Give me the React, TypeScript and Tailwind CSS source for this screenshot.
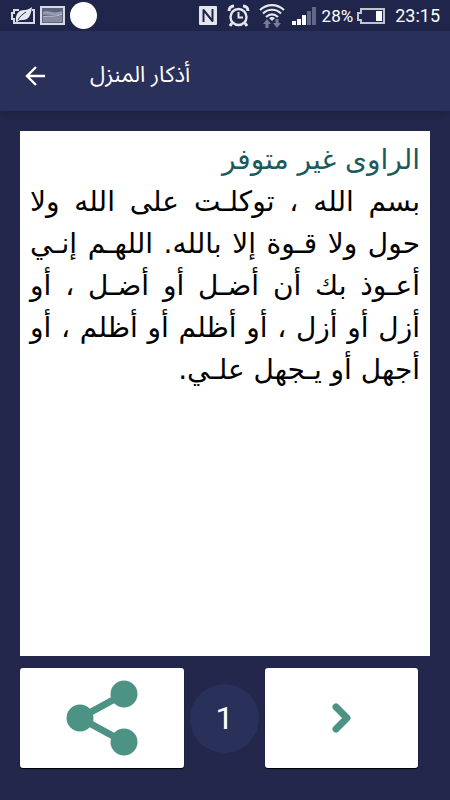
import React from 'react';

const prayerLines = [
  'بسم الله ، توكلـت على الله ولا',
  'حول ولا قـوة إلا بالله. اللهـم إنـي',
  'أعـوذ بك أن أضـل أو أضـل ، أو',
  'أزل أو أزل ، أو أظلم أو أظلم ، أو',
];

const StatusBar: React.FC = () => {
  return (
    <div className="flex h-[31px] items-center justify-between bg-[#20264b] pr-[10px] pl-[10px] text-white">
      <div className="flex items-center gap-[5px]">
        {/* Power saver */}
        <svg width="25" height="18" viewBox="0 0 25 18" fill="none">
          <path d="M9 3H4v3H2v6h2v4h20V3h-2" stroke="#d8dae2" strokeWidth="2" />
          <path d="M6 14C5 6 10 3 14 3c4 0 5-1 8-3-1 9-4 13-9 13-2 0-4 0-5 1l-1 2Z" fill="#e6e7ec" />
          <path d="M8 13c2-4 5-6 8-8" stroke="#20264b" strokeWidth="1" />
        </svg>
        {/* Gallery */}
        <svg width="25" height="19" viewBox="0 0 25 19">
          <rect x="1" y="1" width="23" height="17" fill="#5d647f" stroke="#d8dae2" strokeWidth="2" />
          <path d="M3 6c5-3 9 3 19-1v3c-8 4-12-1-19 1Z" fill="#969bae" />
          <path d="M3 12c6-3 12 1 19-3v7H3Z" fill="#858ba0" />
          <path d="M3 11c6-2 12 1 19-3" stroke="#c5c8d3" fill="none" />
        </svg>
        <span className="h-[27px] w-[27px] rounded-full bg-white" />
      </div>
      <div className="flex items-center">
        {/* NFC */}
        <svg width="18" height="19" viewBox="0 0 18 19" className="mr-[10px]">
          <rect width="18" height="19" rx="1" fill="#e6e7ec" />
          <path d="M4.500 16V4l9 11V3" stroke="#20264b" strokeWidth="2" strokeLinejoin="round" fill="none" />
        </svg>
        {/* Alarm */}
        <svg width="23" height="24" viewBox="0 0 23 24" fill="none" stroke="#e6e7ec" className="mr-[9px]">
          <circle cx="11.500" cy="13" r="8" strokeWidth="2.400" />
          <path d="M11.500 8v5.500H16" strokeWidth="2" />
          <path d="M2 7c0-3 2-5 5-5M21 7c0-3-2-5-5-5M5 19l-2 3M18 19l2 3" strokeWidth="3" />
        </svg>
        {/* Wi-Fi with traffic arrows */}
        <svg width="26" height="26" viewBox="0 0 26 26" fill="none" stroke="#e6e7ec" strokeWidth="2.200" className="mr-[7px]">
          <path d="M1 7c7-6.500 17-6.500 24 0M4 10.500c5-5 13-5 18 0M7 14c4-3.500 8-3.500 12 0" />
          <path d="M10 15q3-2 6 0l-3 3Z" fill="#e6e7ec" stroke="none" />
          <path d="M8 16l4 5H9.500v4h-3v-4H4ZM18 25l-4-5h2.500v-4h3v4H22Z" fill="#777d96" stroke="none" />
        </svg>
        {/* Signal */}
        <svg width="24" height="20" viewBox="0 0 24 20" className="mr-[6px]">
          <path d="M0 15h4v4H0ZM5 13h4v6H5ZM10 9h4v10h-4Z" fill="#fff" />
          <path d="M15 5h4v14h-4ZM20 1h4v18h-4Z" fill="#626986" />
        </svg>
        <span className="mr-[4px] font-['Roboto',sans-serif] text-[17px] leading-[20px]">28%</span>
        {/* Battery */}
        <svg width="28" height="16" viewBox="0 0 28 16" className="mr-[10px]">
          <path d="M4 1h23v14H4v-3H1V5h3Z" fill="none" stroke="#c2c5d0" strokeWidth="2" />
          <rect x="19" y="3" width="6" height="10" fill="#fff" />
        </svg>
        <span className="font-['Roboto',sans-serif] text-[18px] leading-[20px]">23:15</span>
      </div>
    </div>
  );
};

export default function App() {
  return (
    <div className="flex min-h-screen flex-col bg-[#22274b]">
      <StatusBar />

      <header className="flex h-20 items-center bg-[#293059] px-6 pt-2 shadow-md">
        <button type="button" aria-label="رجوع" className="mr-11">
          <svg width="22" height="22" viewBox="0 0 22 22" fill="none" stroke="#fff" strokeWidth="2.400">
            <path d="M21 12H3M12 3l-9 9 9 9" />
          </svg>
        </button>
        <h1 dir="rtl" lang="ar" className="font-['Noto_Sans_Arabic','Noto_Sans',sans-serif] text-[22px] leading-[32px] text-white">
          أذكار المنزل
        </h1>
      </header>

      <main className="flex flex-1 flex-col gap-3 px-5 pt-5 pb-8">
        <section
          dir="rtl"
          lang="ar"
          className="flex-1 bg-white px-[10px] pt-2 font-['DejaVu_Sans',sans-serif] text-[28px] leading-[42px] text-black"
        >
          <h2 className="text-[#1b5a5c]">الراوى غير متوفر</h2>
          <p>
            {prayerLines.map((line) => (
              <span key={line} className="block whitespace-nowrap [text-align-last:justify]">
                {line}
              </span>
            ))}
            <span className="block">أجهل أو يـجهل علـي.</span>
          </p>
        </section>

        <div className="flex items-center gap-[6px] pr-3">
          <button
            type="button"
            aria-label="مشاركة"
            className="flex h-[100px] flex-[164] items-center justify-center rounded-[3px] bg-white shadow-[0_1px_1px_#000]"
          >
            <svg width="72" height="76" viewBox="0 0 72 76" fill="#4c9385">
              <path d="M58 14 14 38l44 24" fill="none" stroke="#4c9385" strokeWidth="7" />
              <circle cx="14" cy="38" r="13.500" />
              <circle cx="58" cy="14" r="13.500" />
              <circle cx="58" cy="62" r="13.500" />
            </svg>
          </button>
          <span className="flex h-[69px] w-[69px] items-center justify-center rounded-full bg-[#293059] font-['Roboto',sans-serif] text-[32px] text-white">
            1
          </span>
          <button
            type="button"
            aria-label="التالي"
            className="flex h-[100px] flex-[153] items-center justify-center rounded-[3px] bg-white shadow-[0_1px_1px_#000]"
          >
            <svg width="20" height="32" viewBox="0 0 20 32" fill="none" stroke="#4c9385" strokeWidth="7" strokeLinecap="round" strokeLinejoin="round">
              <path d="M4 5l11 11L4 27" />
            </svg>
          </button>
        </div>
      </main>
    </div>
  );
}
